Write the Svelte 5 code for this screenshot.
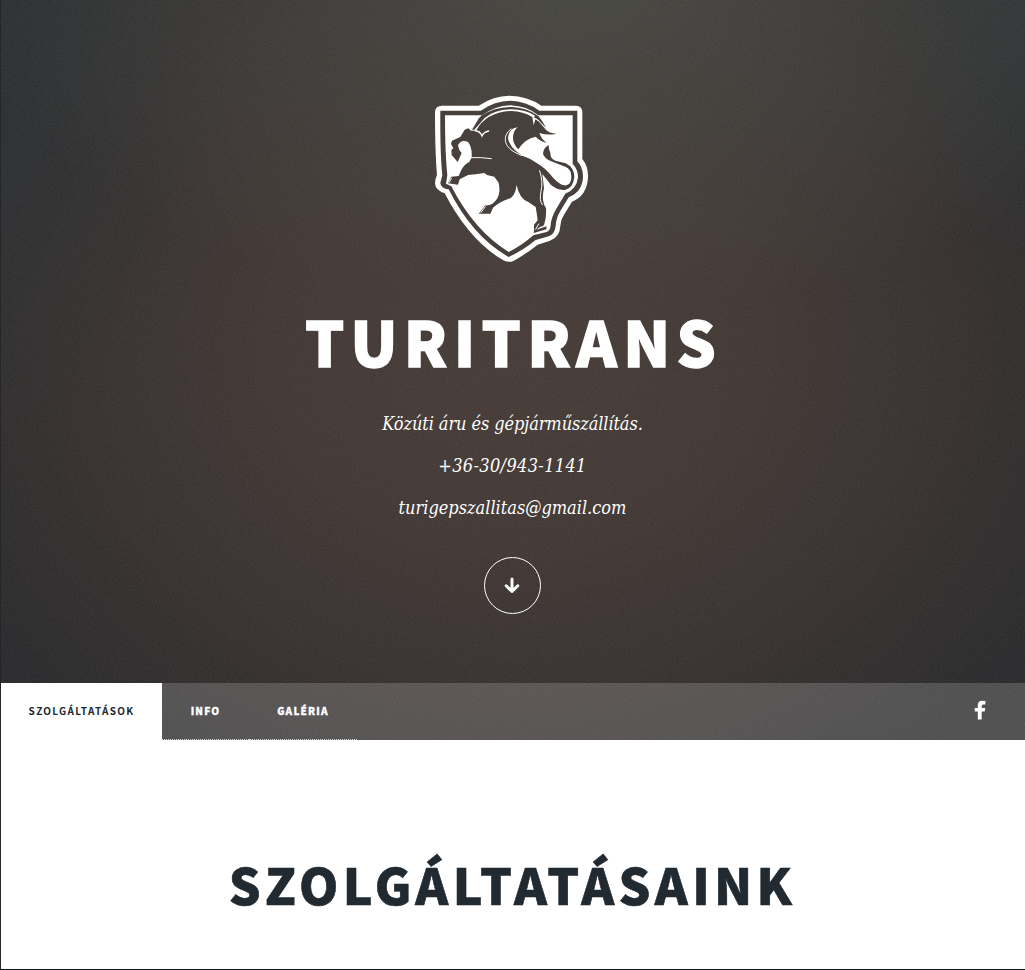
<script>
  const contact = [
    { text: 'Közúti áru és gépjárműszállítás.', kind: 'tagline' },
    { text: '+36-30/943-1141', kind: 'phone' },
    { text: 'turigepszallitas@gmail.com', kind: 'mail' }
  ];
  const tabs = [
    { label: 'Szolgáltatások', kind: 'services', active: true },
    { label: 'Info', kind: 'info', active: false },
    { label: 'Galéria', kind: 'gallery', active: false }
  ];
</script>

<div class="page">
  <svg class="grain" aria-hidden="true">
    <filter id="grain"><feTurbulence type="fractalNoise" baseFrequency="0.55" numOctaves="2" seed="4" /><feColorMatrix type="saturate" values="0" /></filter>
    <rect width="100%" height="100%" filter="url(#grain)" />
  </svg>
  <header>
    <svg class="logo" viewBox="0 0 510 540" aria-hidden="true">
      <path fill="#fff" d="M48 47H158Q203 17 250 17Q305 18 346 47H450Q469 48 469 66V207Q487 229 486 262Q483 318 438 335L414 374Q404 389 403 407Q402 441 372 452L335 464Q300 492 262 513Q248 519 232 511Q130 452 56 310Q28 301 27 280Q27 268 33 255Q27 190 27 66Q28 47 48 47Z" />
      <path class="ink" d="M43 62H164Q207 32 252 32Q301 33 340 62H454V214Q472 234 471 262Q468 307 428 322L403 363Q390 384 389 408Q386 433 368 439L329 450Q291 481 248 501Q140 441 68 298Q44 295 43 278L49 256Q42 190 43 62Z" />
      <path fill="#fff" d="M57 76H168Q209 47 255 46Q302 48 337 76H440V221Q457 240 456 262Q452 299 418 311L391 356Q375 383 374 406Q373 422 362 426L322 436Q287 467 248 486Q145 423 76 289L60 281L64 255Q57 190 57 76Z" />
      <path class="ink" d="M168 76Q205 52 255 51Q304 53 337 78Q346 88 360 113L345 98Q331 83 322 82L328 78Q298 57 252 58Q205 60 176 84L145 119H138L159 84Z" />
      <path class="ink" d="M150 122Q181 66 256 63Q292 64 319 81L323 106L328 88Q340 94 350 108C363 124 370 130 392 131Q367 137 340 129Q347 149 362 158Q343 155 329 140Q298 145 277 178Q255 155 263 130Q267 116 277 112Q250 112 246 143Q248 171 289 197Q314 205 332 219Q359 234 382 264Q404 288 421 286Q436 282 436 261Q436 237 418 230Q393 221 374 213Q357 207 351 192Q351 175 368 165Q368 181 373 187Q372 207 388 212L419 220Q445 232 445 262Q441 294 419 299Q398 303 375 285L349 252L354 294Q345 333 360 354Q362 380 355 402L351 409Q340 408 330 423L324 425V404L335 391Q332 367 329 351L307 336Q280 327 272 285Q267 323 246 327Q219 337 201 353L193 371L158 371L178 346Q198 348 211 329Q225 311 218 278L205 260L183 255L175 249Q147 253 126 255L101 268L96 284L66 280L76 260L98 258L107 238Q115 223 130 216L137 202Q139 171 126 156Q105 147 96 166L100 180L107 189L95 216L77 195L76 180L82 175L75 161L78 152L103 141L116 119L127 115L135 122Z" />
      <g fill="none" stroke="#fff" stroke-linecap="round">
        <path stroke-width="4" d="M149 123Q162 123 168 138Q173 126 188 123" />
        <path stroke-width="3" d="M133 203Q164 201 196 206M341 242Q352 277 345 304Q339 333 349 344M255 117C229 137 232 168 267 187L287 197M70 277L76 265M165 367L178 350M329 418L338 402" />
      </g>
      <path class="ink" d="M324 423L346 414L362 409L361 418L323 429Z" />
    </svg>
    <h1>Turitrans</h1>
    <div class="contact">
      {#each contact as line}<p class={line.kind}><span>{line.text}</span></p>{/each}
    </div>
    <a class="scroll" href="#services" aria-label="Szolgáltatások">
      <svg viewBox="0 0 20 20"><path d="M10 3V15.3M4.2 9.8L10 15.5L15.8 9.8" fill="none" stroke="#fff" stroke-width="3" stroke-linecap="round" stroke-linejoin="round" /></svg>
    </a>
  </header>
  <nav>
    {#each tabs as tab}<a href="#services" class={tab.kind} class:active={tab.active}>{tab.label}</a>{/each}
    <a class="facebook" href="#services" aria-label="Facebook">
      <svg viewBox="0 0 12 20"><path fill="#fff" d="M11.4 1V4.4H9.4Q7.7 4.4 7.7 6V8H11.2L10.7 11.5H7.7V19.4H3.8V11.5H.7V8H3.8V5.2Q3.8.9 8.2.8Q10 .8 11.4 1Z" /></svg>
    </a>
  </nav>
  <main id="services"><h2>Szolgáltatásaink</h2></main>
</div>

<style>
  :global(body) { margin: 0; overflow: hidden; }
  .page {
    position: relative; box-sizing: border-box; width: 1025px; height: 970px; overflow: hidden;
    display: flex; flex-direction: column; border-left: 1px solid #24262a; border-bottom: 1px solid #111214;
    color: #fff; font-family: "Noto Sans CJK SC", sans-serif;
    background:
      radial-gradient(ellipse 620px 330px at 580px -20px, rgba(73,74,68,.85), rgba(70,74,68,0)),
      radial-gradient(ellipse 230px 380px at 0 60px, rgba(42,48,51,.65), transparent),
      radial-gradient(ellipse 150px 260px at 1025px 0, rgba(42,51,54,.6), transparent),
      radial-gradient(ellipse 620px 510px at 515px 350px, #453a35 0%, #403633 38%, #342e2d 72%, #28282a 100%);
  }
  .grain { position: absolute; inset: 0; width: 100%; height: 100%; opacity: .09; }
  header { position: relative; box-sizing: border-box; height: 683px; padding: 90px 1px 0 0; display: flex; flex-direction: column; align-items: center; }
  .logo { width: 170px; height: 180px; margin-right: 4px; flex: none; }
  .ink { fill: #47403c; }
  h1 { margin: 29px -2px 0 0; font-size: 61.5px; line-height: 84px; font-weight: 900; letter-spacing: 6.3px; text-transform: uppercase; -webkit-text-stroke: 1.4px #fff; }
  .contact { margin-top: 20px; }
  p { margin: 0; height: 42px; line-height: 42px; text-align: center; font-family: "DejaVu Serif Condensed", "DejaVu Serif", serif; font-stretch: condensed; font-style: italic; font-size: 18px; white-space: nowrap; }
  .tagline { letter-spacing: -.09px; }
  .phone { letter-spacing: .35px; }
  .scroll { box-sizing: border-box; width: 57px; height: 57px; margin-top: 28px; border: 1.5px solid #fff; border-radius: 50%; display: grid; place-items: center; }
  .scroll svg { width: 20px; height: 20px; margin-right: 1px; }
  nav { position: relative; display: flex; height: 57px; background: rgba(255,255,255,.175); }
  nav a { box-sizing: border-box; height: 57px; line-height: 56px; text-align: center; color: #fff; text-decoration: none; text-transform: uppercase; font-size: 10px; font-weight: 900; letter-spacing: 1.2px; border-bottom: 1px dotted rgba(255,255,255,.8); white-space: nowrap; -webkit-text-stroke: .3px #fff; }
  nav .services { width: 161px; }
  nav .info { width: 87px; }
  nav .gallery { width: 108px; }
  nav .active { background: #fff; color: #212931; border: 0; font-weight: 700; letter-spacing: 1.3px; -webkit-text-stroke: 0; }
  nav .facebook { margin-left: auto; width: 20px; margin-right: 35px; padding-bottom: 3px; border: 0; display: grid; place-items: center; }
  .facebook svg { width: 12px; height: 20px; }
  main { position: relative; flex: 1; background: #fff; display: flex; justify-content: center; }
  h2 { margin: 103px 1px 0 0; height: 80px; font-size: 50px; line-height: 80px; font-weight: 900; color: #212931; text-transform: uppercase; letter-spacing: 4.35px; white-space: nowrap; -webkit-text-stroke: .6px #212931; }
</style>
